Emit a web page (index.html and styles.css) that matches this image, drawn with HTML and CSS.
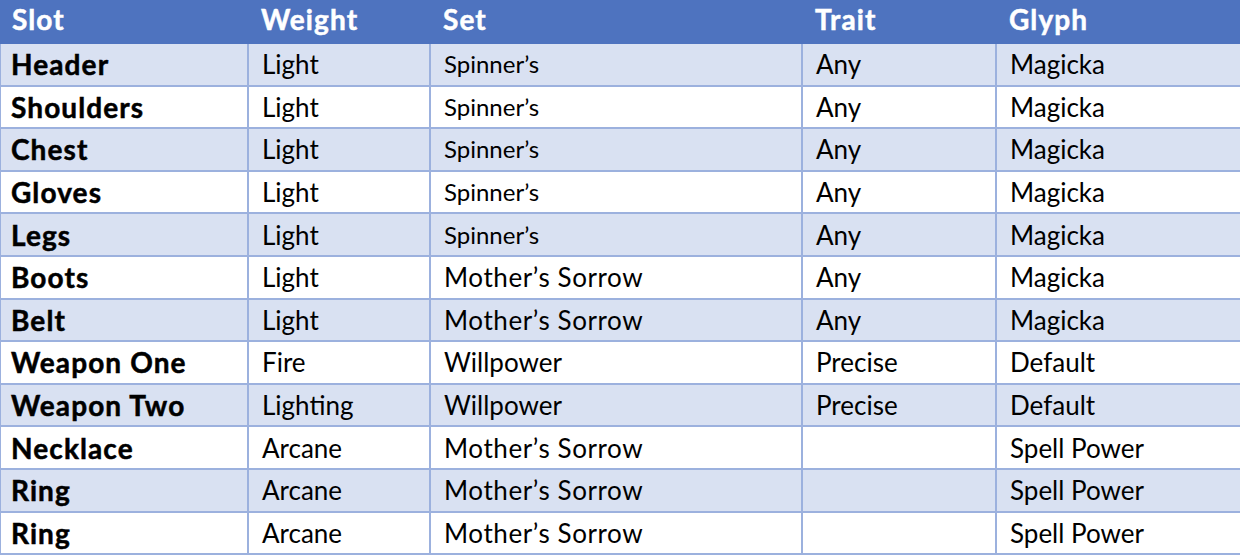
FILE: index.html
```html
<!DOCTYPE html>
<html>
<head>
<meta charset="utf-8">
<link rel="stylesheet" href="styles.css">
</head>
<body>
<table class="gear">
  <colgroup>
    <col class="c-slot"><col class="c-weight"><col class="c-set"><col class="c-trait"><col class="c-glyph">
  </colgroup>
  <thead>
    <tr><th>Slot</th><th>Weight</th><th>Set</th><th>Trait</th><th>Glyph</th></tr>
  </thead>
  <tbody>
    <tr class="alt"><td class="slot">Header</td><td>Light</td><td class="small">Spinner’s</td><td>Any</td><td>Magicka</td></tr>
    <tr><td class="slot">Shoulders</td><td>Light</td><td class="small">Spinner’s</td><td>Any</td><td>Magicka</td></tr>
    <tr class="alt"><td class="slot">Chest</td><td>Light</td><td class="small">Spinner’s</td><td>Any</td><td>Magicka</td></tr>
    <tr><td class="slot">Gloves</td><td>Light</td><td class="small">Spinner’s</td><td>Any</td><td>Magicka</td></tr>
    <tr class="alt"><td class="slot">Legs</td><td>Light</td><td class="small">Spinner’s</td><td>Any</td><td>Magicka</td></tr>
    <tr><td class="slot">Boots</td><td>Light</td><td class="wide">Mother’s Sorrow</td><td>Any</td><td>Magicka</td></tr>
    <tr class="alt"><td class="slot">Belt</td><td>Light</td><td class="wide">Mother’s Sorrow</td><td>Any</td><td>Magicka</td></tr>
    <tr><td class="slot">Weapon One</td><td>Fire</td><td>Willpower</td><td>Precise</td><td>Default</td></tr>
    <tr class="alt"><td class="slot">Weapon Two</td><td>Lighting</td><td>Willpower</td><td>Precise</td><td>Default</td></tr>
    <tr><td class="slot">Necklace</td><td>Arcane</td><td class="wide">Mother’s Sorrow</td><td></td><td>Spell Power</td></tr>
    <tr class="alt"><td class="slot">Ring</td><td>Arcane</td><td class="wide">Mother’s Sorrow</td><td></td><td>Spell Power</td></tr>
    <tr><td class="slot">Ring</td><td>Arcane</td><td class="wide">Mother’s Sorrow</td><td></td><td>Spell Power</td></tr>
  </tbody>
</table>
</body>
</html>
```
FILE: styles.css
```css
html, body {
  margin: 0;
  padding: 0;
  background: #ffffff;
  overflow: hidden;
}
body {
  font-family: "Lato", "Open Sans", sans-serif;
  color: #000;
}
.gear {
  border-collapse: collapse;
  table-layout: fixed;
  width: 1244px;
  margin-left: -1px;
}
.c-slot { width: 248px; }
.c-weight { width: 182px; }
.c-set { width: 372px; }
.c-trait { width: 194px; }
.c-glyph { width: 248px; }

.gear th {
  background: #4e73bf;
  color: #fff;
  font-weight: 700;
  font-size: 28px;
  letter-spacing: 1.1px;
  -webkit-text-stroke: 0.5px #fff;
  text-align: left;
  height: 43px;
  padding: 0 0 4px 12px;
  border: 2px solid #4e73bf;
  border-top: none;
  box-sizing: border-box;
  line-height: 1;
}
.gear th:first-child { padding-left: 11px; }
.gear td {
  font-size: 26px;
  height: 42.6px;
  padding: 0 0 0 13px;
  border: 2px solid #9cb1de;
  box-sizing: border-box;
  line-height: 1;
  white-space: nowrap;
}
.gear td.slot {
  font-weight: 700;
  font-size: 28px;
  letter-spacing: 1.1px;
  -webkit-text-stroke: 0.5px #000;
  padding-left: 10px;
}
.gear td.small {
  font-size: 24px;
}
.gear td.wide {
  letter-spacing: 0.6px;
}
.gear tr.alt td {
  background: #d9e1f2;
}
```
